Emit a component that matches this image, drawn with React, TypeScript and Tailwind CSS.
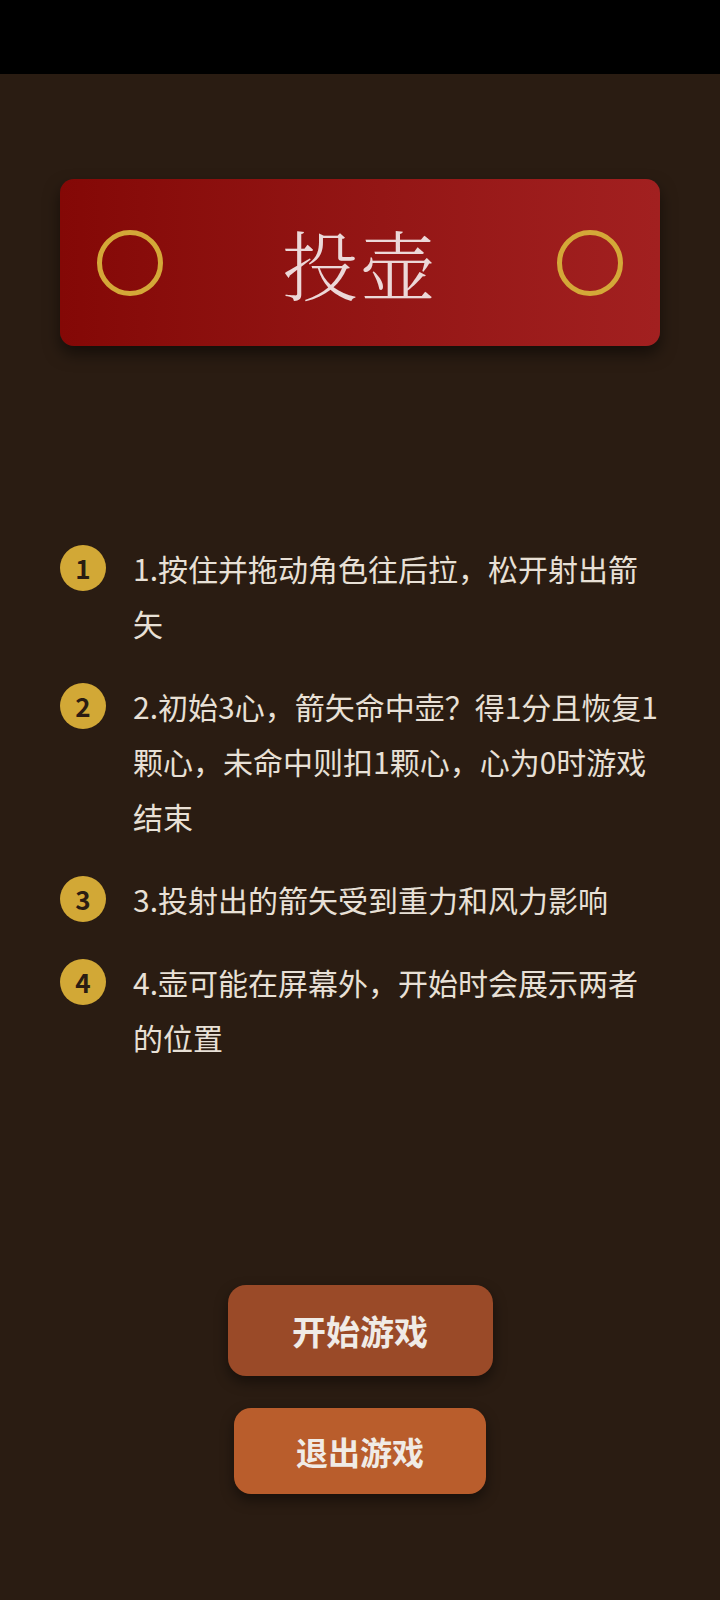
import React from "react";

const rules = [
  "1.按住并拖动角色往后拉，松开射出箭矢",
  "2.初始3心，箭矢命中壶？得1分且恢复1颗心，未命中则扣1颗心，心为0时游戏结束",
  "3.投射出的箭矢受到重力和风力影响",
  "4.壶可能在屏幕外，开始时会展示两者的位置",
];

export default function App() {
  return (
    <div
      className="w-[720px] h-[1600px] bg-[#2a1c12] flex flex-col overflow-hidden"
      style={{ fontFamily: '"Noto Sans CJK SC", "Noto Sans", sans-serif' }}
    >
      <div className="h-[74px] bg-black shrink-0" />
      <div className="flex flex-col px-[60px]">
        <div className="mt-[105px] h-[167px] rounded-[14px] bg-gradient-to-r from-[#840806] to-[#a22020] shadow-[0_8px_16px_rgba(0,0,0,0.5)] flex items-center justify-between px-[37px]">
          <div className="w-[66px] h-[66px] rounded-full border-[5px] border-[#d4a838]" />
          <div
            className="text-[76px] leading-none text-[#ecd8d8] font-light tracking-[2px]"
            style={{ fontFamily: '"Noto Serif CJK SC", "Source Han Serif SC", "AR PL UMing CN", "SimSun", "Songti SC", "Noto Sans CJK SC", serif' }}
          >
            投壶
          </div>
          <div className="w-[66px] h-[66px] rounded-full border-[5px] border-[#d4a838]" />
        </div>

        <div className="mt-[195px] flex flex-col gap-[28px]">
          {rules.map((r, i) => (
            <div key={i} className="flex items-start">
              <div className="mt-[4px] w-[46px] h-[46px] shrink-0 rounded-full bg-[#d2a836] flex items-center justify-center text-[26px] font-bold text-[#2a1c12] leading-none">
                {i + 1}
              </div>
              <div className="ml-[27px] flex-1 text-[30px] leading-[55px] text-[#e8e0d6]">
                {r}
              </div>
            </div>
          ))}
        </div>
      </div>

      <div className="mt-[220px] flex flex-col items-center">
        <button className="w-[265px] h-[91px] rounded-[18px] bg-[#9a4a28] text-[34px] font-bold text-[#f0ebe6] shadow-[0_6px_14px_rgba(0,0,0,0.45)] flex items-center justify-center">
          开始游戏
        </button>
        <button className="mt-[32px] w-[252px] h-[86px] rounded-[17px] bg-[#b95d2c] text-[32px] font-bold text-[#f0ebe6] shadow-[0_6px_14px_rgba(0,0,0,0.45)] flex items-center justify-center">
          退出游戏
        </button>
      </div>
    </div>
  );
}
